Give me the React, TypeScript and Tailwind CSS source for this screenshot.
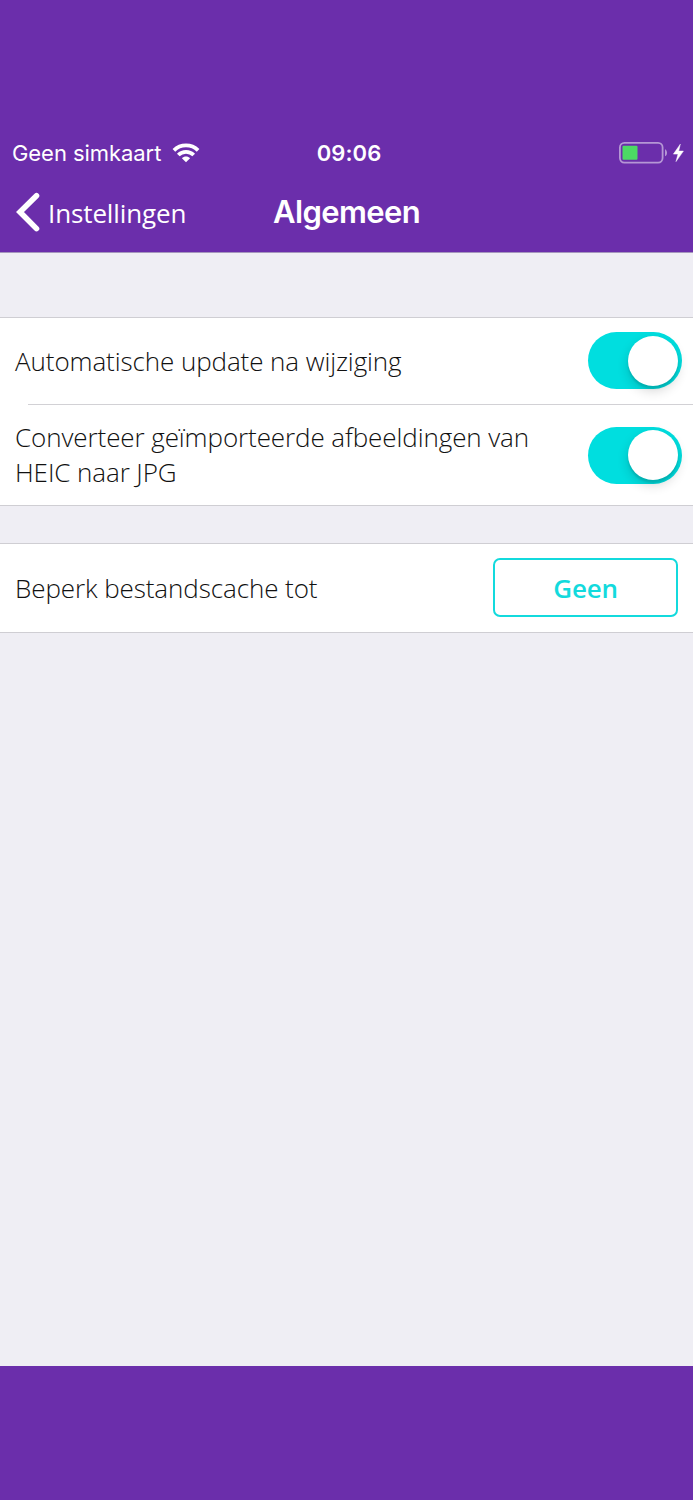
import type { FC, ReactNode } from 'react';

const WifiIcon: FC = () => (
    <svg width="28" height="20" viewBox="0 0 28 20" fill="none" stroke="white" strokeWidth="3.8" className="mb-[2px]">
        <path d="M1.9 7.3C8.6 0.8 19.4 0.8 26.1 7.3" />
        <path d="M6.3 12C10.6 7.8 17.4 7.8 21.7 12" />
        <path d="M14 19.2L9.9 15.2C12.2 13 15.8 13 18.1 15.2L14 19.2Z" fill="white" stroke="none" />
    </svg>
);

const BatteryIcon: FC = () => (
    <svg width="66" height="24" viewBox="0 0 66 24" fill="none" className="mb-px">
        <rect x="0.9" y="1.9" width="42.7" height="19.7" rx="4.5" stroke="white" strokeOpacity="0.5" strokeWidth="1.8" />
        <path d="M46 8.2C48.7 9.2 48.7 14.3 46 15.3Z" fill="white" fillOpacity="0.5" />
        <rect x="3.5" y="4.8" width="15" height="14" rx="1" fill="#4CD964" />
        <path d="M61.3 3.2L54.4 13.1H59L57 20.6L64.4 10.1H59.7L61.3 3.2Z" fill="white" stroke="white" strokeWidth="0.5" />
    </svg>
);

const Toggle: FC<{ label: string }> = ({ label }) => (
    <button
        type="button"
        role="switch"
        aria-checked="true"
        aria-label={label}
        className="flex h-[57px] w-[94px] shrink-0 items-center justify-end rounded-full bg-[#00dedf] pr-[3.5px]"
    >
        <span className="size-[50px] rounded-full bg-white shadow-[0_5px_12px_rgba(0,0,0,0.16),0_3px_2px_rgba(0,0,0,0.10)]" />
    </button>
);

const Label: FC<{ children: ReactNode }> = ({ children }) => (
    <span className="whitespace-nowrap text-[26px] font-light leading-[35px] tracking-[-0.09px] text-[#111111]">
        {children}
    </span>
);

export default function App() {
    return (
        <div className="flex h-[1500px] w-[693px] flex-col overflow-hidden bg-[#efeef4] font-['Open_Sans',sans-serif]">
            <header className="h-[253px] shrink-0 border-b border-[#a596bd] bg-[#6b2eab] pt-[137px] text-white">
                {/* Status bar */}
                <div className="grid h-[30px] grid-cols-[1fr_auto_1fr] items-center pl-3 pr-2 font-['Inter',sans-serif] text-[22px]">
                    <div className="flex items-center gap-[11px]">
                        <span className="whitespace-nowrap tracking-[-0.06px]">Geen simkaart</span>
                        <WifiIcon />
                    </div>
                    <span className="pl-px font-semibold tracking-[0.1px]">09:06</span>
                    <div className="flex justify-end">
                        <BatteryIcon />
                    </div>
                </div>

                {/* Navigation bar */}
                <div className="grid h-[90px] grid-cols-[1fr_auto_1fr] items-center pl-[14px] pr-[14px]">
                    <button type="button" className="flex items-center gap-[7px]">
                        <svg width="27" height="42" viewBox="0 0 27 42" fill="none" stroke="white" strokeWidth="5.6" strokeLinecap="round" strokeLinejoin="miter">
                            <path d="M22.5 4.8L6 21L22.5 37.6" />
                        </svg>
                        <span className="pt-[2px] text-[26px] leading-[35px] tracking-[-0.12px]">Instellingen</span>
                    </button>
                    <h1 className="font-['Inter',sans-serif] text-[31px] font-semibold tracking-[-0.6px]">Algemeen</h1>
                    <div />
                </div>
            </header>

            <main className="flex-1 pt-16">
                <section className="border-y border-[#cfced3] bg-white">
                    <div className="flex h-[86px] items-start justify-between pl-[15px] pr-[11.5px] pt-[14px]">
                        <span className="pt-3">
                            <Label>Automatische update na wijziging</Label>
                        </span>
                        <Toggle label="Automatische update na wijziging" />
                    </div>
                    <div className="ml-7 h-px bg-[#d2d1d5]" />
                    <div className="flex h-[100px] items-center justify-between pl-[15px] pr-[11.5px]">
                        <Label>
                            Converteer geïmporteerde afbeeldingen van
                            <br />
                            HEIC naar JPG
                        </Label>
                        <Toggle label="Converteer naar JPG" />
                    </div>
                </section>

                <section className="mt-[37px] flex h-[90px] items-center justify-between border-y border-[#cfced3] bg-white pl-[15px] pr-[15px]">
                    <Label>Beperk bestandscache tot</Label>
                    <button
                        type="button"
                        className="mb-[2px] h-[59px] w-[185px] rounded-[7px] border-2 border-[#13dadd] pt-[2px] text-[26px] font-semibold tracking-[-0.2px] text-[#13dadd]"
                    >
                        Geen
                    </button>
                </section>
            </main>

            <footer className="h-[134px] shrink-0 bg-[#6b2eab]" />
        </div>
    );
}
